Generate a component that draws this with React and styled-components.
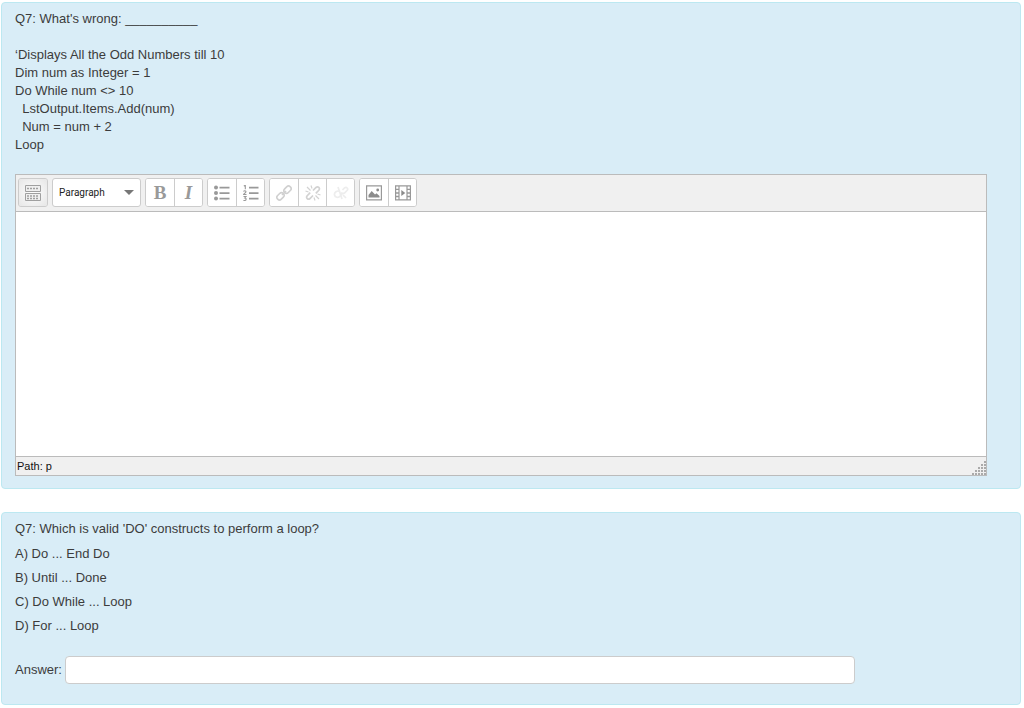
import React from "react";
import styled, { createGlobalStyle } from "styled-components";

const odd = `‘Displays All the Odd Numbers till 10
Dim num as Integer = 1
Do While num <> 10
  LstOutput.Items.Add(num)
  Num = num + 2
Loop`;

const choices = ["A) Do ... End Do", "B) Until ... Done", "C) Do While ... Loop", "D) For ... Loop"];

const KitchenSinkIcon = () => (
  <Icon viewBox="0 0 16 16">
    <path d="M.5 .5h15v6H.5zM.5 8.500h15v7H.5z" fill="#f0f0f0" stroke="#a0a0a0" />
    <path d="M2 3.500h12M2 11h12M2 13.500h12" fill="none" stroke="#a0a0a0" strokeWidth="1.400" strokeDasharray="2 1" />
  </Icon>
);

const BulletIcon = () => (
  <Icon viewBox="0 0 16 16">
    <g fill="#999">
      <circle cx="2" cy="2.500" r="2" />
      <circle cx="2" cy="8" r="2" />
      <circle cx="2" cy="13.500" r="2" />
      <path d="M5.500 1.700H15.500v1.700H5.500zM5.500 7.200H15.500v1.700H5.500zM5.500 12.700H15.500v1.700H5.500z" />
    </g>
  </Icon>
);

const NumberIcon = () => (
  <Icon viewBox="0 0 16 16">
    <g fill="none" stroke="#999" strokeWidth="1.100">
      <path d="M.8 1l1.500-.7v4M.5 6.500c.5-1 2.500-1 2.500.2 0 .8-1.500 1.500-2.500 2.800h3M.5 11.500h2.500L1.800 13c1.800 0 1.800 2.500-.2 2.500H.4" />
    </g>
    <path d="M6 1.700h9.500v1.700H6zM6 7.200h9.500v1.700H6zM6 12.700h9.500v1.700H6z" fill="#999" />
  </Icon>
);

const LinkIcon = () => (
  <Icon viewBox="0 0 16 16">
    <g fill="none" stroke="#d0d0d0" strokeWidth="1.600">
      <rect x="-4" y="-2.600" width="8" height="5.200" rx="2.600" transform="translate(4.500 11.300) rotate(-45)" />
      <rect x="-4" y="-2.600" width="8" height="5.200" rx="2.600" transform="translate(11.500 4.700) rotate(-45)" />
      <path d="M6 10l4-4" />
    </g>
  </Icon>
);

const UnlinkIcon = () => (
  <Icon viewBox="0 0 16 16">
    <g fill="none" stroke="#d2d2d2" strokeWidth="1.700">
      <path d="M8 5.500l3-3c2-1.700 4.500.5 2.800 2.800l-3 3M8 10.500l-3 3c-2 1.700-4.500-.5-2.800-2.800l3-3" />
      <path d="M2 2l3.500 3.500M6 .5l1 3M.5 6l3 1M14 14l-3.500-3.500M10 15.500l-1-3M15.500 10l-3-1" strokeWidth="1.200" />
    </g>
  </Icon>
);

const NoAutoLinkIcon = () => (
  <Icon viewBox="0 0 16 16">
    <g fill="none" stroke="#ededed" strokeWidth="1.700">
      <path d="M7 6.500c-3-1.500-6 1-5.500 3.500s4 3 5.500 1.200l3-3.400M9.500 5l2-2c2-1.500 4.200.7 2.500 2.500l-2.500 2.500c-1.500 1.200-3 .5-3.500-.5" />
      <path d="M5 2l4 12M13 13l-3-3" />
    </g>
  </Icon>
);

const ImageIcon = () => (
  <Icon viewBox="0 0 16 16">
    <path d="M.6 .9h14.800v14H.6z" fill="#fff" stroke="#999" strokeWidth="1.200" />
    <path d="M2.500 12.500V10l3.200-4 3.300 3.500 1.500-1.300 3 2.800v1.500z" fill="#8c8c8c" />
    <circle cx="11.700" cy="5" r="1.400" fill="#8c8c8c" />
  </Icon>
);

const MediaIcon = () => (
  <Icon viewBox="0 0 16 16">
    <path d="M.6 .9h14.800v14H.6zM4 1v14M12 1v14" fill="none" stroke="#999" strokeWidth="1.200" />
    <path d="M.5 4.400H4M.5 8H4M.5 11.500H4M12 4.400h3.500M12 8h3.500M12 11.500h3.500" stroke="#999" strokeWidth="1.300" />
    <path d="M6.300 5l4 3-4 3z" fill="#8c8c8c" />
  </Icon>
);

const ResizeGrip = () => (
  <Grip viewBox="0 0 14 14" fill="#aaa">
    {[0, 1, 2, 3, 4].map((row) =>
      Array.from({ length: row + 1 }, (_, col) => (
        <rect key={`${row}-${col}`} x={12 - col * 3} y={row * 3} width="2" height="2" />
      ))
    )}
  </Grip>
);

export default function App() {
  return (
    <Page>
      <GlobalStyle />
      <Question>
        <Prompt>Q7: What's wrong: __________</Prompt>
        <Code>{odd}</Code>
        <Editor>
          <Toolbar role="toolbar" aria-label="Formatting">
            <Group>
              <Tool type="button" $active aria-label="Toolbar toggle"><KitchenSinkIcon /></Tool>
            </Group>
            <FormatBox>
              <Format aria-label="Paragraph format">
                <option>Paragraph</option>
                <option>Heading</option>
              </Format>
              <Arrow viewBox="0 0 10 5"><path d="M0 0h10L5 5z" fill="#777" /></Arrow>
            </FormatBox>
            <Group>
              <Tool type="button" aria-label="Bold"><Glyph>B</Glyph></Tool>
              <Tool type="button" aria-label="Italic"><Glyph as="i">I</Glyph></Tool>
            </Group>
            <Group>
              <Tool type="button" aria-label="Unordered list"><BulletIcon /></Tool>
              <Tool type="button" aria-label="Ordered list"><NumberIcon /></Tool>
            </Group>
            <Group>
              <Tool type="button" disabled aria-label="Link"><LinkIcon /></Tool>
              <Tool type="button" disabled aria-label="Unlink"><UnlinkIcon /></Tool>
              <Tool type="button" disabled aria-label="Prevent automatic linking"><NoAutoLinkIcon /></Tool>
            </Group>
            <Group>
              <Tool type="button" aria-label="Image"><ImageIcon /></Tool>
              <Tool type="button" aria-label="Media"><MediaIcon /></Tool>
            </Group>
          </Toolbar>
          <Writing aria-label="Your answer" />
          <Status>
            <span>Path: p</span>
            <ResizeGrip />
          </Status>
        </Editor>
      </Question>
      <Question>
        <Prompt>Q7: Which is valid 'DO' constructs to perform a loop?</Prompt>
        <Choices>
          {choices.map((choice) => (
            <li key={choice}>{choice}</li>
          ))}
        </Choices>
        <AnswerRow>
          <label htmlFor="answer">Answer:</label>
          <AnswerInput id="answer" type="text" />
        </AnswerRow>
      </Question>
    </Page>
  );
}

const GlobalStyle = createGlobalStyle`
  * {
    box-sizing: border-box;
  }
  body {
    margin: 0;
    background: #fff;
    color: #3c3c3c;
    font: 13px/18px "Liberation Sans", Arial, sans-serif;
  }
`;

const Page = styled.main`
  display: flex;
  flex-direction: column;
  gap: 23px;
  padding: 2px 3px 2px 1px;
`;

const Question = styled.section`
  padding: 7px 33px 12px 13px;
  background: #d9edf7;
  border: 1px solid #bce8f1;
  border-radius: 4px;
`;

const Prompt = styled.p`
  margin: 0;
`;

const Code = styled.p`
  margin: 18px 0 20px;
  white-space: pre-wrap;
`;

const Editor = styled.div`
  border: 1px solid #bbb;
`;

const Toolbar = styled.div`
  display: flex;
  flex-wrap: wrap;
  gap: 4px;
  padding: 3px 2px 4px;
  background: #f0f0f0;
  border-bottom: 1px solid #bbb;
`;

const Group = styled.div`
  display: flex;
  border: 1px solid #ccc;
  border-radius: 3px;
  background: #fff;
  overflow: hidden;
`;

const Tool = styled.button`
  display: flex;
  align-items: center;
  justify-content: center;
  width: 28px;
  height: 27px;
  padding: 0;
  border: 0;
  background: ${({ $active }) => ($active ? "radial-gradient(#fff, #e6e6e6)" : "#fff")};
  & + & {
    border-left: 1px solid #ccc;
  }
`;

const Icon = styled.svg`
  width: 16px;
  height: 16px;
`;

const Glyph = styled.b`
  color: #999;
  font: bold 19px/27px "Liberation Serif", "Times New Roman", serif;
  i& {
    font-style: italic;
  }
`;

const FormatBox = styled.div`
  position: relative;
  width: 89px;
`;

const Format = styled.select`
  appearance: none;
  display: block;
  width: 100%;
  height: 29px;
  padding: 0 6px;
  border: 1px solid #ccc;
  border-radius: 3px;
  background: #fff;
  color: #222;
  font: 10px Roboto, "Open Sans", sans-serif;
`;

const Arrow = styled.svg`
  position: absolute;
  top: 12px;
  right: 7px;
  width: 10px;
  height: 5px;
  pointer-events: none;
`;

const Writing = styled.textarea`
  display: block;
  width: 100%;
  height: 244px;
  padding: 8px;
  border: 0;
  resize: none;
  outline: none;
  background: #fff;
  font: inherit;
`;

const Status = styled.div`
  display: flex;
  align-items: flex-end;
  justify-content: space-between;
  padding-left: 1px;
  border-top: 1px solid #bbb;
  background: #f0f0f0;
  color: #111;
  font-size: 11px;
`;

const Grip = styled.svg`
  width: 14px;
  height: 14px;
`;

const Choices = styled.ul`
  display: flex;
  flex-direction: column;
  gap: 6px;
  margin: 7px 0 21px;
  padding: 0;
  list-style: none;
`;

const AnswerRow = styled.div`
  display: flex;
  align-items: center;
  gap: 3px;
  margin: 0 132px 8px 0;
`;

const AnswerInput = styled.input`
  flex: 1;
  min-width: 0;
  height: 28px;
  padding: 4px 8px;
  border: 1px solid #ccc;
  border-radius: 4px;
  background: #fff;
  color: #555;
  font: inherit;
`;
